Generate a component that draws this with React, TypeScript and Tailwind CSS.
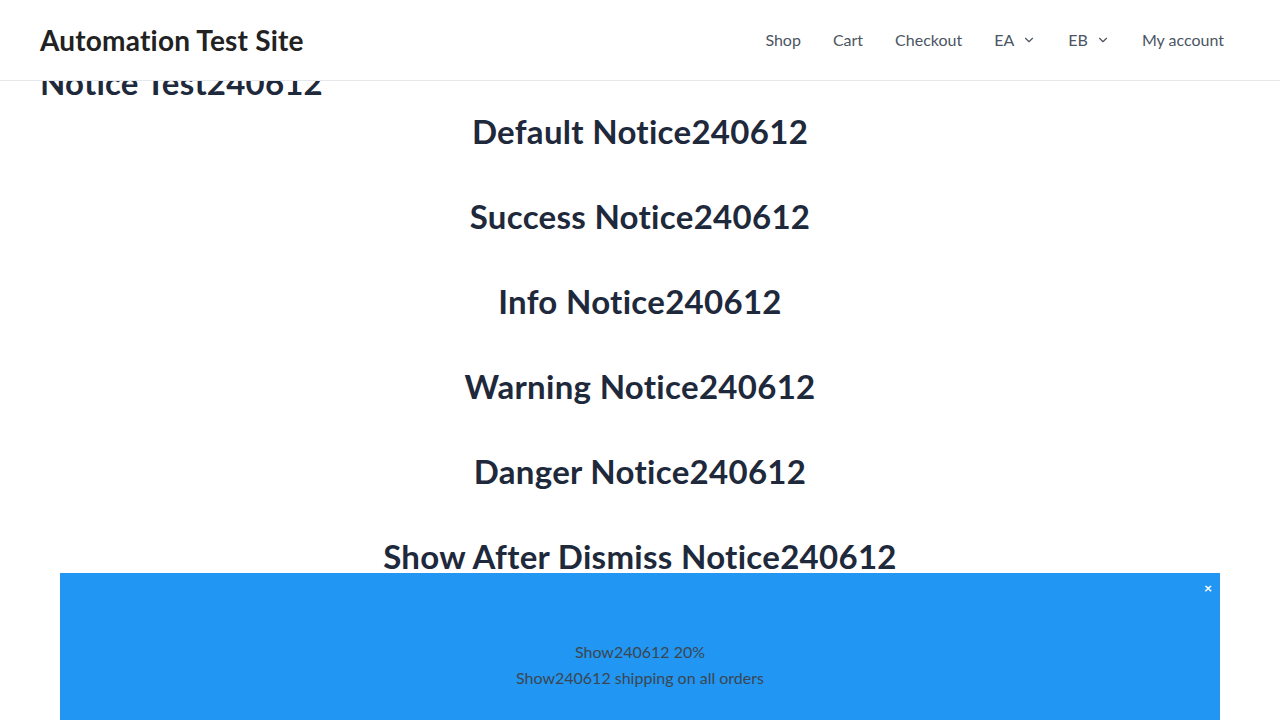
import React from 'react';
import { ChevronDown } from 'lucide-react';

const notices = [
  'Default Notice240612',
  'Success Notice240612',
  'Info Notice240612',
  'Warning Notice240612',
  'Danger Notice240612',
  'Show After Dismiss Notice240612',
];

const navItems = [
  { label: 'Shop' },
  { label: 'Cart' },
  { label: 'Checkout' },
  { label: 'EA', sub: true },
  { label: 'EB', sub: true },
  { label: 'My account' },
];

export default function App() {
  return (
    <div className="relative min-h-[720px] bg-white font-['Lato','Liberation_Sans',sans-serif] overflow-hidden">
      {/* sticky header sits over the page title */}
      <header className="fixed top-0 left-0 right-0 z-10 h-[81px] bg-white border-b border-[#e5e7eb] flex items-center justify-between pl-[40px] pr-[40px]">
        <div className="text-[28px] font-bold text-[#222222] tracking-[0.2px]">Automation Test Site</div>
        <nav className="flex items-center">
          {navItems.map((item) => (
            <a
              key={item.label}
              href="#"
              className="flex items-center gap-[8px] px-[16px] text-[16px] text-[#4b5563]"
            >
              {item.label}
              {item.sub && <ChevronDown className="w-[14px] h-[14px]" strokeWidth={2} />}
            </a>
          ))}
        </nav>
      </header>

      <main className="pt-[60px]">
        <h1 className="px-[40px] text-[33px] leading-[44px] font-bold text-[#1e293b] tracking-[0.2px]">Notice Test240612</h1>
        <div className="flex flex-col items-center mt-[-15px]">
          {notices.map((n) => (
            <h2 key={n} className="h-[85px] flex items-center text-[33px] font-bold text-[#1e293b] tracking-[0.3px]">
              {n}
            </h2>
          ))}
        </div>
      </main>

      <div className="fixed left-[60px] right-[60px] top-[573px] h-[180px] z-20 bg-[#2196f3] flex flex-col items-center pt-[66px] text-[16px] leading-[26px] text-[#3c4650]">
        <button className="absolute top-[8px] right-[8px] text-white text-[14px] font-bold leading-none">×</button>
        <p>Show240612 20%</p>
        <p>Show240612 shipping on all orders</p>
      </div>
    </div>
  );
}
